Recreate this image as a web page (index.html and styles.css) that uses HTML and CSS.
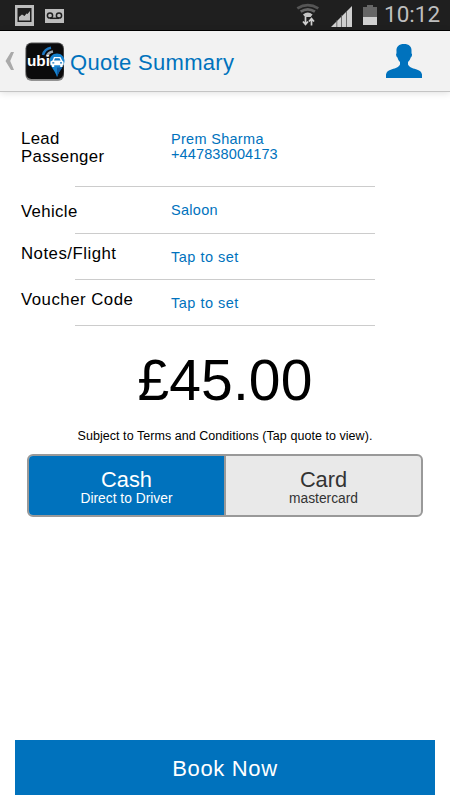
FILE: index.html
```html
<!DOCTYPE html>
<html lang="en">
<head>
<meta charset="utf-8">
<title>Quote Summary</title>
<link rel="stylesheet" href="styles.css">
</head>
<body>
<div class="screen">
  <div class="status">
    <svg class="status-left" width="70" height="31" viewBox="0 0 70 31">
      <path fill="#bdbdbd" fill-rule="evenodd" d="M15 5h19v21H15zM17.500 8v14h14V8z"/>
      <path fill="#bdbdbd" d="M19 20.500v-3.500l3-2.500 2.500 1.500 2-2.500 1 .5 2.500-3v9.500z"/>
      <rect x="45" y="9" width="19" height="14" fill="#bdbdbd"/>
      <g fill="none" stroke="#1f1f1f" stroke-width="1.500"><circle cx="50" cy="15.500" r="2.600"/><circle cx="59" cy="15.500" r="2.600"/><path d="M50 18.300h9"/></g>
    </svg>
    <svg class="status-right" width="85" height="31" viewBox="295 0 85 31">
      <g fill="none" stroke-width="2.700">
        <path stroke="#555" d="M297.300 8.300q10.500-6.500 21 0"/>
        <path stroke="#666" d="M300.700 11.700q7-4.800 14.200 0"/>
      </g>
      <path fill="#c4c4c4" d="M303 14.500q4.700-3.800 9.600 0l-2 2.500h-5.600z"/>
      <g fill="none" stroke="#d0d0d0" stroke-width="1.700"><path d="M305.500 17v7.500m-2.500-3 2.500 3 2.500-3M311.500 25.500v-7m-2.500 3 2.500-3 2.500 3"/></g>
      <path fill="#cfcfcf" d="M331 27 352 6v21z"/>
      <path stroke="#555" stroke-width=".8" d="M336.800 20v7M341.500 15v12M346.500 11v16"/>
      <path fill="#666" d="M363 7h4V5h6v2h4v10h-14z"/>
      <path fill="#d0d0d0" d="M363 17h14v8h-14z"/>
    </svg>
    <span class="clock">10:12</span>
  </div>
  <header class="bar">
    <svg class="back" width="10" height="18" viewBox="0 0 10 18"><path fill="#aaa" d="M6 0h3L5.200 9 9 18H6L.5 9z"/></svg>
    <svg class="logo" width="40" height="40" viewBox="0 0 40 40">
      <defs><linearGradient id="rim" x2="0" y2="1"><stop offset="0" stop-color="#555"/><stop offset=".75" stop-color="#222"/><stop offset="1" stop-color="#999"/></linearGradient></defs>
      <rect x=".5" y=".5" width="38.500" height="38.500" rx="6" fill="url(#rim)"/>
      <rect x="1.500" y="1.500" width="36.500" height="35.500" rx="5" fill="#0b0b0c"/>
      <g fill="none" stroke-width="2.500"><path stroke="#1d78c2" d="M18 13Q19.500 7 26 5.800"/><path stroke="#9ba6b0" d="M21.800 14.500Q23 10.500 28 9.500"/></g>
      <path fill="#1683d0" d="M32 11.500c4.500 0 7.500 3.500 7.500 7.500 0 5-5 8-7.500 16-2-7-7.500-11-7.500-16 0-4 3-7.500 7.500-7.500z"/>
      <path fill="#0f5ca3" d="M32 25.500h5.500q-3.500 4-5.500 9.500z"/>
      <path fill="#fff" d="M25.500 19.500l2-1 1.500-3.500h6.500l1.700 3.500 1.300 1.300v3.500h-1V25h-2.300v-1.700h-6V25h-2.300v-1.700h-1.400z"/>
      <path fill="#1677bd" d="m29 18.500 1-2.300h4.500l1.200 2.300zM27.300 20.300h2v1.200h-2zM35 20.300h2v1.200h-2z"/>
      <text class="logo-text" x="2" y="24" textLength="23" lengthAdjust="spacingAndGlyphs">ubi</text>
    </svg>
    <h1 class="title">Quote Summary</h1>
    <svg class="person" width="36" height="34" viewBox="0 0 36 34"><path fill="#0072bd" d="M18 0c5 0 8 2.500 7.500 7.500v2c1.200.5.300 3.500-.8 4-.5 2-1.300 3-2.700 4.500v2.500c1.500 3 4 3.500 8 4.800 4 1.200 5.500 2.700 6 5.200v3.500H0v-3.500c.5-2.500 2-4 6-5.200 4-1.300 6.500-1.800 8-4.800V18c-1.400-1.500-2-2.500-2.500-4.500-1-.5-2-3.500-1-4v-2C10 2.500 13 0 18 0z"/></svg>
  </header>
  <main class="content">
    <div class="row row-lead"><div class="label">Lead<br>Passenger</div><div class="value value-lead">Prem Sharma<br><span class="phone">+447838004173</span></div></div>
    <div class="row row-vehicle"><div class="label">Vehicle</div><div class="value">Saloon</div></div>
    <div class="row row-extra"><div class="label">Notes/Flight</div><div class="value">Tap to set</div></div>
    <div class="row row-extra"><div class="label">Voucher Code</div><div class="value">Tap to set</div></div>
    <div class="price">£45.00</div>
    <div class="terms">Subject to Terms and Conditions (Tap quote to view).</div>
    <div class="payment">
      <div class="option option-on"><span class="method">Cash</span><span class="detail">Direct to Driver</span></div>
      <div class="option"><span class="method">Card</span><span class="detail">mastercard</span></div>
    </div>
  </main>
  <div class="book">Book Now</div>
</div>
</body>
</html>
```

FILE: styles.css
```css
* { box-sizing: border-box; }
body { margin: 0; background: #fff; font-family: "Liberation Sans", Arial, sans-serif; }
.screen { width: 450px; height: 800px; display: flex; flex-direction: column; overflow: hidden; }
.status { height: 31px; flex: none; display: flex; background: #1f1f1f; border-bottom: 1px solid #000; }
.status svg { flex: none; }
.status-right { margin-left: 225px; }
.clock { margin-left: 4px; color: #bebebe; font: 22.5px/28px Roboto, sans-serif; letter-spacing: 0; }
.bar { height: 61px; flex: none; display: flex; background: #f2f2f2; border-bottom: 1px solid #c4c4c4; box-shadow: 0 1px 7px rgba(0,0,0,.13); }
.bar svg { flex: none; }
.back { margin: 21px 0 0 5px; }
.logo { margin: 11px 0 0 10px; }
.logo-text { fill: #fff; font: bold 15.500px "Liberation Sans", Arial, sans-serif; }
.title { margin: 18px 0 0 5px; width: 316px; color: #0072bd; font-size: 22px; line-height: 27px; font-weight: 400; letter-spacing: .32px; }
.person { margin: 13px 0 0; }
.content { flex: 1; }
.row { display: flex; position: relative; padding-left: 21px; }
.row::after { content: ""; position: absolute; left: 75px; width: 300px; bottom: 0; height: 1px; background: #ccc; }
.row-lead { height: 95px; padding-top: 38px; }
.row-vehicle { height: 47px; padding-top: 16px; }
.row-extra { height: 46px; padding-top: 11px; }
.label { width: 150px; color: #000; font-size: 16.8px; line-height: 18px; letter-spacing: .35px; }
.row-extra .label { letter-spacing: .5px; }
.value { color: #0072bd; font-size: 14.5px; line-height: 15px; letter-spacing: .3px; }
.row-extra .value { padding-top: 5px; letter-spacing: .5px; }
.value-lead { padding-top: 2px; }
.phone { letter-spacing: .12px; }
.price { margin-top: 21px; text-align: center; font-size: 57px; line-height: 66px; letter-spacing: .1px; }
.terms { margin-top: 15px; text-align: center; font-size: 12.5px; line-height: 16px; letter-spacing: .05px; }
.payment { margin: 10px 27px 0; width: 396px; height: 63px; display: flex; border: 2px solid #999; border-radius: 6px; background: #e9e9e9; overflow: hidden; }
.option { flex: 1; padding-top: 11px; display: flex; flex-direction: column; align-items: center; color: #333; }
.option-on { background: #0072bd; color: #fff; border-right: 2px solid #999; }
.method { font-size: 21.8px; line-height: 26px; }
.detail { font-size: 13.8px; line-height: 14px; margin-top: -1px; }
.book { flex: none; height: 55px; margin: 0 15px 5px; background: #0072bd; color: #fff; font-size: 22px; line-height: 57px; text-align: center; letter-spacing: .65px; }
```
